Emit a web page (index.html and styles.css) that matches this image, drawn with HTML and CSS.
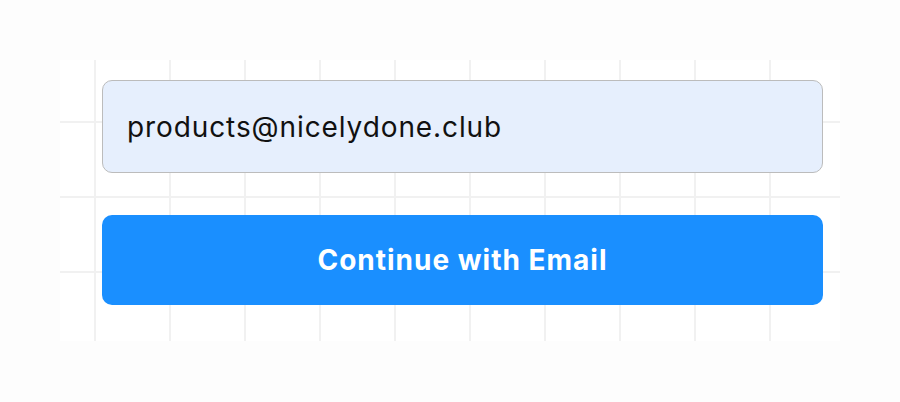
FILE: index.html
```html
<!DOCTYPE html>
<html lang="en">
<head>
    <meta charset="UTF-8">
    <meta name="viewport" content="width=device-width, initial-scale=1.0">
    <title>Continue with Email</title>
    <link rel="stylesheet" href="styles.css">
</head>
<body>

    <div class="canvas">
        <form class="email-form">
            <input class="email-input" type="email" value="products@nicelydone.club">
            <button class="email-button" type="button">Continue with Email</button>
        </form>
    </div>

</body>
</html>
```

FILE: styles.css
```css
/* Общие стили */
body {
    font-family: 'Inter', 'Liberation Sans', sans-serif;
    background-color: #fdfdfd;
    margin: 0;
    padding: 60px;
    color: #111;
}

/* Сетка на фоне */
.canvas {
    width: 780px;
    height: 281px;
    box-sizing: border-box;
    padding: 20px 17px 0 42px;
    background-color: #fff;
    background-image:
        linear-gradient(to right, #f1f1f1 2px, transparent 2px),
        linear-gradient(to bottom, #f1f1f1 2px, transparent 2px);
    background-size: 75px 75px;
    background-position: 34px 61px;
}

.email-form {
    display: flex;
    flex-direction: column;
    gap: 42px;
}

.email-input {
    height: 93px;
    box-sizing: border-box;
    padding: 0 24px;
    border: 1.5px solid #bcbcbc;
    border-radius: 10px;
    background-color: #e6effd;
    font-family: 'Inter', 'Liberation Sans', sans-serif;
    font-size: 28px;
    letter-spacing: 0.9px;
    color: #111;
    outline: none;
}

.email-button {
    height: 90px;
    border: none;
    border-radius: 10px;
    background-color: #1a8fff;
    color: #fff;
    font-family: 'Inter', 'Liberation Sans', sans-serif;
    font-size: 28px;
    font-weight: 700;
    letter-spacing: 1px;
    cursor: pointer;
}
```
